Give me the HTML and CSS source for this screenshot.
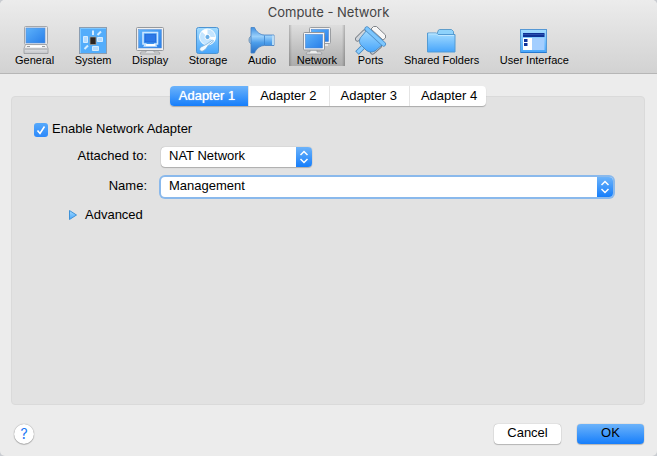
FILE: index.html
```html
<!DOCTYPE html>
<html lang="en">
<head>
  <meta charset="UTF-8">
  <title>Compute - Network</title>
  <link rel="stylesheet" href="styles.css">
</head>
<body>

  <!-- shared gradients for the icons -->
  <svg class="defs" aria-hidden="true">
    <defs>
      <linearGradient id="screen" x1="0" y1="0" x2="1" y2="1">
        <stop offset="0" stop-color="#5db2fb"/>
        <stop offset="1" stop-color="#287ee9"/>
      </linearGradient>
      <linearGradient id="sky" x1="0" y1="0" x2="0" y2="1">
        <stop offset="0" stop-color="#a4dcff"/>
        <stop offset="1" stop-color="#47a5fb"/>
      </linearGradient>
      <linearGradient id="case" x1="0" y1="0" x2="0" y2="1">
        <stop offset="0" stop-color="#fdfdfd"/>
        <stop offset="1" stop-color="#c3c5c9"/>
      </linearGradient>
      <linearGradient id="horn" x1="0" y1="0" x2="0" y2="1">
        <stop offset="0" stop-color="#3f8fe0"/>
        <stop offset="0.35" stop-color="#9ad0fb"/>
        <stop offset="0.6" stop-color="#4b9dea"/>
        <stop offset="1" stop-color="#2a70c4"/>
      </linearGradient>
    </defs>
  </svg>

  <div class="window">
    <header class="top-bar">
      <h1>Compute - Network</h1>
      <nav class="toolbar">
        <button type="button" class="tool">
          <svg viewBox="0 0 32 30" aria-hidden="true">
            <rect x="5.500" y="1.500" width="23" height="18" rx="1" fill="#e9e9ea" stroke="#a5a7aa"/>
            <rect x="7" y="3" width="19" height="15" fill="url(#screen)" stroke="#5b8fd5" stroke-width=".6"/>
            <path d="M6.500 19.500h21l1.500 4v5h-24v-5z" fill="url(#case)" stroke="#97999d" stroke-width=".8"/>
            <path d="M8 21.500h3M23 21.500h3M5.500 24h23" stroke="#9a9da1" stroke-width="1"/>
            <path d="M11 21.500h12" stroke="#fff" stroke-width="1.500"/>
          </svg>
          <span>General</span>
        </button>
        <button type="button" class="tool">
          <svg viewBox="0 0 32 30" aria-hidden="true">
            <rect x="2.500" y="2.500" width="27" height="26" fill="#53adfb" stroke="#8b9db1"/>
            <path d="M3.500 28V3.500H29" fill="none" stroke="#7dc7ff"/>
            <rect x="13" y="12" width="6" height="7.500" fill="#2b2522" stroke="#a9a49a" stroke-width=".7"/>
            <path d="M6.500 11.500h4v6h-4zM20.500 12.500h5v4h-5zM15.500 21.500h6v4h-6z" fill="#b5dcff" stroke="#d4ecff"/>
            <path d="M16 5.500v4.500M20.500 10l3.500-3.500M7.500 24l3.500-3.500" stroke="#d4ecff" stroke-width="2"/>
          </svg>
          <span>System</span>
        </button>
        <button type="button" class="tool">
          <svg viewBox="0 0 32 30" aria-hidden="true">
            <path d="M12 25h8v2h5l1 2H6l1-2h5z" fill="#dedfe1" stroke="#8e9094" stroke-width=".7"/>
            <rect x="2.500" y="2.500" width="27" height="23" rx="1" fill="#f0f0f1" stroke="#96999d"/>
            <rect x="4.500" y="4.500" width="23" height="18.500" fill="url(#screen)" stroke="#5b8fd5" stroke-width=".5"/>
            <path d="M9 7.500h14.500V19H21l1 2H10.500l1-2H9z" fill="none" stroke="#cce6ff" stroke-width="1.600"/>
            <rect x="11" y="9.500" width="10.500" height="7.500" fill="#2c78e7" stroke="#1e5ed0" stroke-width=".6"/>
            <path d="M12 20h9" stroke="#fff" stroke-width="2"/>
          </svg>
          <span>Display</span>
        </button>
        <button type="button" class="tool">
          <svg viewBox="0 0 32 30" aria-hidden="true">
            <rect x="4.500" y="2.500" width="22" height="26" rx="2" fill="url(#sky)" stroke="#4d94d2"/>
            <circle cx="15.500" cy="12" r="8" fill="#c4e5ff" stroke="#f4fbff"/>
            <path d="M15.500 12l-6-5.500a8 8 0 0 1 6-2.500zM15.500 12l7 4.500a8 8 0 0 0 1-4.500z" fill="#fff"/>
            <circle cx="15.500" cy="12" r="2.600" fill="#6aaee6" stroke="#fff"/>
            <path d="M20.500 15L15 19l-6 3c-2.500 2-1 5 2 4 3-1.500 4-4 5.500-6l5-4z" fill="#f3faff" stroke="#77aeda" stroke-width=".8"/>
          </svg>
          <span>Storage</span>
        </button>
        <button type="button" class="tool">
          <svg viewBox="0 0 32 30" aria-hidden="true">
            <path d="M6 11c-4 0-4 8 0 8z" fill="#9cc5e8" stroke="#5b83a9" stroke-width=".8"/>
            <path d="M5 2.500h3.500C10 6.500 14 10 18.500 10H28v10.500h-9.500C14 20.500 10 24 8.500 28H5z" fill="url(#horn)" stroke="#4582c4" stroke-width=".8"/>
            <path d="M18.500 10.500v9.500" stroke="#3b83cc" stroke-width=".8"/>
            <path d="M26 10.500h2v9.500h-2z" fill="#b9dcf5"/>
          </svg>
          <span>Audio</span>
        </button>
        <button type="button" class="tool tool-active" aria-current="page">
          <svg viewBox="0 0 32 30" aria-hidden="true">
            <rect x="8.500" y="2.500" width="21" height="16" rx="1" fill="#f2f2f3" stroke="#9a9da1"/>
            <rect x="10.500" y="4.500" width="17" height="12" fill="url(#screen)" stroke="#4d86d0" stroke-width=".6"/>
            <path d="M24 19h3v2h-3z" fill="#e4e5e7"/>
            <path d="M9 25h7v2h4l1 2H5l1-2h3z" fill="#eee" stroke="#919499" stroke-width=".7"/>
            <rect x="2.500" y="7.500" width="21" height="17.500" rx="1" fill="#f6f6f7" stroke="#94979b"/>
            <rect x="4.500" y="9.500" width="17" height="13.500" fill="url(#screen)" stroke="#4d86d0" stroke-width=".6"/>
          </svg>
          <span>Network</span>
        </button>
        <button type="button" class="tool">
          <svg viewBox="0 0 32 30" aria-hidden="true">
            <path d="M2.500 14l7-7M17.500 27l7-6" stroke="#70767e" stroke-width="5" stroke-linecap="round"/>
            <path d="M2.500 14l7-7M17.500 27l7-6" stroke="#cfd4da" stroke-width="3.400" stroke-linecap="round"/>
            <path d="M16 4l2.500-2.500h3L30.500 10v3L28 15z" fill="#f7f7f7" stroke="#808489"/>
            <path d="M2 28l6-6" stroke="#4084bd" stroke-width="5"/>
            <path d="M2.500 27.500l5.500-5.500" stroke="#8ccdff" stroke-width="3.400"/>
            <path d="M12 5L6.500 11.500C4 14 4 17 5.500 19.500l5.500 5.500c3 2.500 6 2.500 9 1l7-6z" fill="url(#sky)" stroke="#397db8" stroke-width=".8"/>
            <path d="M12 4l16.500 15" stroke="#4a8ac4" stroke-width="5" stroke-linecap="round"/>
            <path d="M12 4l16.500 15" stroke="#7cc6fd" stroke-width="3.600" stroke-linecap="round"/>
          </svg>
          <span>Ports</span>
        </button>
        <button type="button" class="tool">
          <svg viewBox="0 0 32 30" aria-hidden="true">
            <path d="M10.500 10l2-5 1-.500h12l2 2v5" fill="#8ed2fb" stroke="#5e9dcb"/>
            <path d="M1.500 8h9l1.500 1.500h17v17.500h-27.500z" fill="url(#sky)" stroke="#549bd3"/>
            <path d="M2.500 9h8l1.500 1.500h16" fill="none" stroke="#bfe7ff"/>
          </svg>
          <span>Shared Folders</span>
        </button>
        <button type="button" class="tool">
          <svg viewBox="0 0 32 30" aria-hidden="true">
            <rect x="2.500" y="4.500" width="26" height="23" fill="url(#sky)" stroke="#5698d5"/>
            <path d="M3 27.500h25.500" stroke="#2679d1"/>
            <rect x="5" y="8" width="21.500" height="4" fill="#0f3296"/>
            <path d="M5 9.500h21.500" stroke="#3a62c2" stroke-width=".6"/>
            <rect x="5" y="13" width="9" height="12" fill="#fff"/>
            <rect x="14" y="13" width="12.500" height="12" fill="#a3ceff"/>
            <path d="M6 14h3.500v3H6zM6 18h3.500v3H6z" fill="#12349b"/>
          </svg>
          <span>User Interface</span>
        </button>
      </nav>
    </header>

    <main class="content">
      <div class="tabs" role="tablist">
        <button type="button" role="tab" class="tab tab-active" aria-selected="true">Adapter 1</button>
        <button type="button" role="tab" class="tab" aria-selected="false">Adapter 2</button>
        <button type="button" role="tab" class="tab" aria-selected="false">Adapter 3</button>
        <button type="button" role="tab" class="tab" aria-selected="false">Adapter 4</button>
      </div>

      <div class="panel" role="tabpanel">
        <div class="check-row">
          <span class="check">
            <input type="checkbox" id="enable" checked>
            <svg viewBox="0 0 14 14" aria-hidden="true"><path d="M3.500 7.500l2.500 3 4.500-7" fill="none" stroke="#fff" stroke-width="1.600"/></svg>
          </span>
          <label for="enable">Enable Network Adapter</label>
        </div>

        <div class="form">
          <label for="attached">Attached to:</label>
          <div class="select select-short">
            <select id="attached">
              <option>NAT Network</option>
            </select>
            <svg viewBox="0 0 16 20" aria-hidden="true"><path d="M4.500 8L8 4.500 11.500 8M4.500 12L8 15.500 11.500 12" fill="none" stroke="#fff" stroke-width="1.500"/></svg>
          </div>

          <label for="name">Name:</label>
          <div class="select select-focus">
            <select id="name">
              <option>Management</option>
            </select>
            <svg viewBox="0 0 16 20" aria-hidden="true"><path d="M4.500 8L8 4.500 11.500 8M4.500 12L8 15.500 11.500 12" fill="none" stroke="#fff" stroke-width="1.500"/></svg>
          </div>
        </div>

        <button type="button" class="advanced" aria-expanded="false">
          <svg viewBox="0 0 8 12" aria-hidden="true"><path d="M.500 1.500L7.500 6 .500 10.500z" fill="url(#sky)" stroke="#3f92d8"/></svg>
          Advanced
        </button>
      </div>
    </main>

    <footer class="bottom-bar">
      <button type="button" class="help" aria-label="Help">?</button>
      <div class="actions">
        <button type="button" class="button">Cancel</button>
        <button type="button" class="button button-default">OK</button>
      </div>
    </footer>
  </div>

</body>
</html>
```
FILE: styles.css
```css
* {
  box-sizing: border-box;
}
html {
  background: #c9ccd1;
}
body {
  margin: 0;
  font-family: "Liberation Sans", Arial, sans-serif;
  font-size: 13px;
  line-height: 18px;
  color: #000;
}
button,
select {
  font: inherit;
  color: inherit;
  margin: 0;
  padding: 0;
  border: 0;
  background: none;
}
.defs {
  position: absolute;
  width: 0;
  height: 0;
}
.window {
  display: flex;
  flex-direction: column;
  min-height: 100vh;
  background: #ececec;
  border-radius: 5px;
  overflow: hidden;
}

/* title and toolbar */
.top-bar {
  padding: 3px 7px 7px;
  background: linear-gradient(#ececec, #d2d2d2);
  border-bottom: 1px solid #b6b6b6;
}
h1 {
  margin: 0 0 4px;
  font-family: Inter, "Liberation Sans", sans-serif;
  font-size: 13px;
  font-weight: 400;
  line-height: 18px;
  text-align: center;
  color: #444;
}
.toolbar {
  display: flex;
  justify-content: space-between;
  max-width: 570px;
}
.tool {
  display: flex;
  flex-direction: column;
  align-items: center;
  padding: 0 8px;
  font-size: 11px;
  line-height: 11px;
  white-space: nowrap;
}
.tool svg {
  width: 32px;
  height: 30px;
  margin: 0 -4px;
}
.tool-active {
  background: linear-gradient(90deg, rgba(0, 0, 0, 0.2), transparent 3px, transparent calc(100% - 3px), rgba(0, 0, 0, 0.2)), linear-gradient(#dedede, #acacac);
}

/* adapter tabs */
.content {
  flex: 1;
  display: flex;
  flex-direction: column;
  padding: 12px 12px 0 11px;
}
.tabs {
  display: flex;
  align-self: center;
  position: relative;
  z-index: 1;
  margin-bottom: -10px;
  background: #fff;
  border-radius: 4px;
  box-shadow: 0 1px 1px rgba(0, 0, 0, 0.25);
}
.tab {
  height: 20px;
  padding: 0 12px 0 11px;
  border-left: 1px solid #e4e4e4;
}
.tab:first-child {
  padding: 0 13px 0 9px;
  border-left: 0;
  border-radius: 4px 0 0 4px;
}
.tab:last-child {
  padding-right: 9px;
}
.tab-active {
  color: #fff;
  background: linear-gradient(#6cb3fa, #167efb);
  text-shadow: 0 0 1px #fff;
}
.panel {
  flex: 1;
  padding: 23px 31px 20px 22px;
  background: #e2e2e2;
  border: 1px solid #dadada;
  border-radius: 4px;
}
.check-row {
  display: flex;
  gap: 4px;
}
.check {
  display: grid;
  margin-top: 3px;
}
.check input,
.check svg {
  grid-area: 1 / 1;
  width: 14px;
  height: 14px;
  margin: 0;
}
.check input {
  appearance: none;
  border-radius: 3px;
  background: linear-gradient(#56a9fb, #2c89fb);
}
.check svg {
  pointer-events: none;
}
.form {
  display: grid;
  grid-template-columns: 113px 1fr;
  gap: 10px 14px;
  margin-top: 9px;
}
.form label {
  text-align: right;
}
.select {
  display: grid;
  grid-template-columns: 1fr 16px;
  height: 20px;
  border-radius: 4px;
  background: #fff;
  box-shadow: 0 0 1px rgba(0, 0, 0, 0.4), 0 1px 1px rgba(0, 0, 0, 0.2);
}
.select-short {
  width: 151px;
}
.select-focus {
  box-shadow: 0 0 0 2px #8ab9ec;
}
.select select {
  grid-area: 1 / 1 / 2 / 3;
  appearance: none;
  height: 20px;
  padding: 0 20px 2px 8px;
  outline: none;
}
.select svg {
  grid-area: 1 / 2;
  width: 16px;
  height: 20px;
  border-radius: 0 4px 4px 0;
  background: linear-gradient(#6cb3fa, #167efb);
  pointer-events: none;
}
.advanced {
  display: flex;
  align-items: center;
  gap: 8px;
  margin: 9px 0 0 35px;
}
.advanced svg {
  width: 8px;
  height: 12px;
}

/* dialog buttons */
.bottom-bar {
  display: flex;
  align-items: center;
  justify-content: space-between;
  padding: 19px 13px 12px 14px;
}
.help {
  width: 20px;
  height: 20px;
  border-radius: 50%;
  background: #fff;
  box-shadow: 0 0 1px rgba(0, 0, 0, 0.5), 0 1px 1px rgba(0, 0, 0, 0.2);
  font-family: Inter, "Liberation Sans", sans-serif;
  font-size: 14px;
  color: #1a78f5;
}
.actions {
  display: flex;
  gap: 16px;
}
.button {
  width: 67px;
  height: 20px;
  padding-bottom: 3px;
  border-radius: 4px;
  background: #fff;
  box-shadow: 0 0 1px rgba(0, 0, 0, 0.4), 0 1px 1px rgba(0, 0, 0, 0.2);
}
.button-default {
  background: linear-gradient(#6cb3fa, #167efb);
}
```
